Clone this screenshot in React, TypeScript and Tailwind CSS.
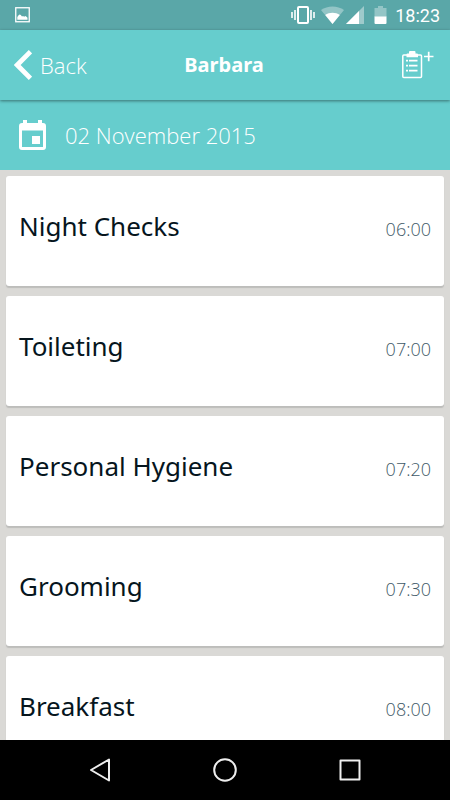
import React from 'react'

const TASKS = [
  { id: 'night-checks', title: 'Night Checks', time: '06:00' },
  { id: 'toileting', title: 'Toileting', time: '07:00' },
  { id: 'hygiene', title: 'Personal Hygiene', time: '07:20' },
  { id: 'grooming', title: 'Grooming', time: '07:30' },
  { id: 'breakfast', title: 'Breakfast', time: '08:00' },
]

function StatusBar() {
  return (
    <div className="flex h-[30px] shrink-0 items-center bg-[#5aa7a8] pr-[10px] pl-[15px] text-white">
      <svg width="15" height="16" viewBox="0 0 15 16" fill="none" aria-hidden="true">
        <rect x="0.75" y="0.75" width="13.5" height="14" stroke="currentColor" strokeWidth="1.3" />
        <path d="M2.3 12.7V10l1.5-2 1-.6 1 .6 1.2 1.6 1-.5 1.2.6 1-.6 1.3.7 1 1v1.9z" fill="currentColor" />
      </svg>
      <div className="ml-auto flex items-center">
        <svg width="24" height="18" viewBox="0 0 24 18" fill="none" stroke="currentColor" aria-hidden="true">
          <rect x="7" y="1" width="10" height="16" rx="1" strokeWidth="2" />
          <path d="M4 4v10M1 6v6M20 4v10M23 6v6" strokeWidth="1.6" />
        </svg>
        <svg className="ml-[6px]" width="23" height="18" viewBox="0 0 23 18" fill="currentColor" aria-hidden="true">
          <path d="M11.5 18L0 4C6.5-.8 16.5-.8 23 4z" opacity="0.35" />
          <path d="M11.5 18L4.2 9.1c4-3 10.600-3 14.6 0z" />
        </svg>
        <svg className="ml-[2px]" width="18" height="18" viewBox="0 0 18 18" fill="currentColor" aria-hidden="true">
          <path d="M18 0v18H0z" opacity="0.35" />
          <path d="M18 0v18h-5V5z" opacity="0.1" />
          <path d="M13 5v13H0z" />
        </svg>
        <svg className="ml-[10px]" width="13" height="18" viewBox="0 0 13 18" fill="currentColor" aria-hidden="true">
          <path d="M4 0h5v2h3.500v9H.5V2H4z" opacity="0.35" />
          <path d="M.5 10.500h12v6.500q0 1-1 1h-10q-1 0-1-1z" />
        </svg>
        <span className="ml-[8px] pt-px font-[Roboto,sans-serif] text-[18px] leading-5">18:23</span>
      </div>
    </div>
  )
}

function Header() {
  return (
    <header className="relative z-10 grid h-[70px] shrink-0 grid-cols-3 items-center bg-[#66cdcd] pr-4 pl-[14px] text-white shadow-[0_1px_3px_rgba(0,0,0,0.45)]">
      <button type="button" className="flex items-center gap-[8px] justify-self-start">
        <svg width="18" height="30" viewBox="0 0 18 30" fill="none" stroke="currentColor" strokeWidth="4.8" aria-hidden="true">
          <path d="M16.500 1.700L3.200 15l13.300 13.300" />
        </svg>
        <span className="text-[22px] leading-7 font-light">Back</span>
      </button>
      <h1 className="text-center font-['Noto_Sans',sans-serif] text-[20px] leading-7 font-bold">Barbara</h1>
      <button type="button" aria-label="Add task" className="justify-self-end">
        <svg width="32" height="28" viewBox="0 0 32 28" fill="none" stroke="currentColor" aria-hidden="true">
          <rect x="0.8" y="4" width="18.700" height="22.500" rx="1" strokeWidth="1.500" />
          <path d="M4.500 6.200V3.600q0-1 1-1H7V1q0-1 1-1h4.500q1 0 1 1v1.600h1.500q1 0 1 1v2.600z" fill="currentColor" stroke="none" />
          <path d="M4 9.700h2M7 9.700h8.500M4 14.700h2M7 14.700h8.500M4 19.700h2M7 19.700h8.500" strokeWidth="1.700" />
          <path d="M22 5.500h9.500M26.700.8v9.400" strokeWidth="1.700" />
        </svg>
      </button>
    </header>
  )
}

function DateBar() {
  return (
    <div className="flex h-[70px] shrink-0 items-center gap-[19px] bg-[#66cdcd] px-[19px] text-white">
      <svg width="27" height="30" viewBox="0 0 27 30" fill="currentColor" aria-hidden="true">
        <path fillRule="evenodd" d="M4 0h4v3h11V0h4v3h1q3 0 3 3v21q0 3-3 3H3q-3 0-3-3V6q0-3 3-3h1zM3 10.500v16.500h21V10.500z" />
        <path d="M13 16h8v8h-8z" />
      </svg>
      <time dateTime="2015-11-02" className="text-[22px] leading-7 font-light">02 November 2015</time>
    </div>
  )
}

function NavBar() {
  return (
    <nav className="flex h-[60px] shrink-0 items-center justify-center gap-[101px] bg-black text-[#eeeeee]">
      <button type="button" aria-label="Back">
        <svg width="24" height="24" viewBox="0 0 24 24" fill="none" stroke="currentColor" strokeWidth="2" strokeLinejoin="round" aria-hidden="true">
          <path d="M21 1.500v21L3 12z" />
        </svg>
      </button>
      <button type="button" aria-label="Home">
        <svg width="24" height="24" viewBox="0 0 24 24" fill="none" stroke="currentColor" strokeWidth="2" aria-hidden="true">
          <circle cx="12" cy="12" r="10.800" />
        </svg>
      </button>
      <button type="button" aria-label="Recent apps">
        <svg width="24" height="24" viewBox="0 0 24 24" fill="none" stroke="currentColor" strokeWidth="2" strokeLinejoin="round" aria-hidden="true">
          <rect x="2.500" y="2.500" width="19" height="19" />
        </svg>
      </button>
    </nav>
  )
}

export default function App() {
  return (
    <div className="flex h-screen flex-col bg-[#dad9d6] font-['Open_Sans','Noto_Sans',sans-serif]">
      <StatusBar />
      <Header />
      <DateBar />
      <main className="min-h-0 flex-1 overflow-hidden px-[6px] pt-[6px]">
        <ul className="space-y-[10px]">
          {TASKS.map(t => (
            <li key={t.id} className="flex h-[110px] items-center justify-between rounded-[3px] bg-white px-[13px] pb-[10px] shadow-[0_2px_1px_#bdbdbb]">
              <h2 className="font-['Noto_Sans',sans-serif] text-[26px] leading-8 text-[#06151d]">{t.title}</h2>
              <span className="pt-[5px] text-[18px] leading-6 font-light text-[#3f5a68]">{t.time}</span>
            </li>
          ))}
        </ul>
      </main>
      <NavBar />
    </div>
  )
}
